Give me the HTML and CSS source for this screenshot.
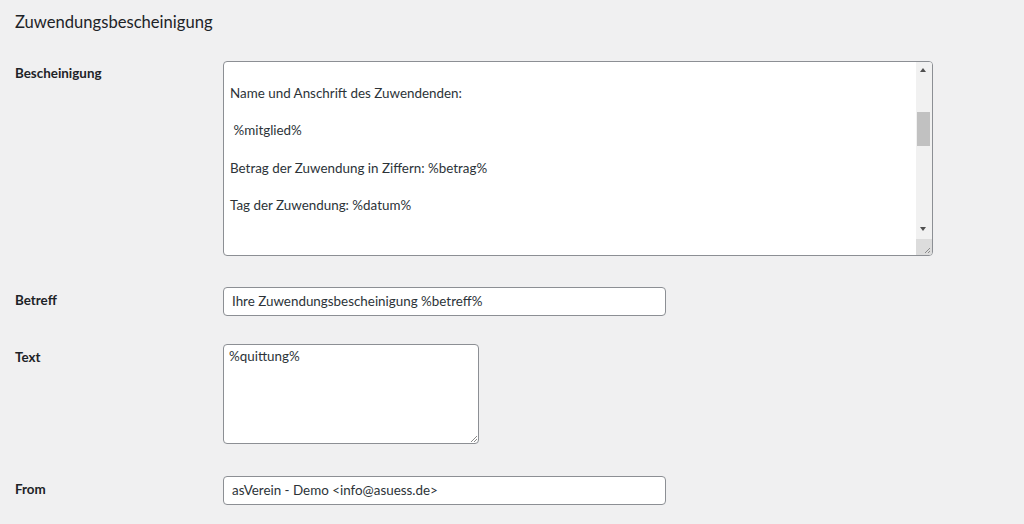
FILE: index.html
```html
<!DOCTYPE html>
<html lang="de">
<head>
<meta charset="utf-8">
<title>Zuwendungsbescheinigung</title>
<link rel="stylesheet" href="styles.css">
</head>
<body>
<div class="page">
  <h2 class="title">Zuwendungsbescheinigung</h2>
  <div class="form">
    <div class="row row-first">
      <div class="label label-first">Bescheinigung</div>
      <div class="ta-big">
        <div class="ta-content"><p>Name und Anschrift des Zuwendenden:</p><p>&nbsp;%mitglied%</p><p>Betrag der Zuwendung in Ziffern: %betrag%</p><p>Tag der Zuwendung: %datum%</p></div>
        <div class="sb">
          <div class="sb-up"></div>
          <div class="sb-thumb"></div>
          <div class="sb-down"></div>
        </div>
        <div class="sb-corner">
          <svg width="16" height="16" viewBox="0 0 16 16"><path d="M14 9 L9 14 M14 12 L12 14" stroke="#8a8a8a" stroke-width="1" fill="none"/></svg>
        </div>
      </div>
    </div>
    <div class="row row-betreff">
      <div class="label">Betreff</div>
      <div class="input">Ihre Zuwendungsbescheinigung %betreff%</div>
    </div>
    <div class="row row-text">
      <div class="label">Text</div>
      <div class="ta-small">
        <div class="ta-small-content">%quittung%</div>
        <svg class="grip" width="10" height="10" viewBox="0 0 10 10"><path d="M9 3 L3 9 M9 6 L6 9" stroke="#8a8a8a" stroke-width="1" fill="none"/></svg>
      </div>
    </div>
    <div class="row row-from">
      <div class="label">From</div>
      <div class="input">asVerein - Demo &lt;info@asuess.de&gt;</div>
    </div>
  </div>
</div>
</body>
</html>
```
FILE: styles.css
```css
html, body {
  margin: 0;
  padding: 0;
  background: #f0f0f1;
}
body {
  font-family: Lato, "Noto Sans", sans-serif;
  color: #3c434a;
  height: 524px;
  overflow: hidden;
}
.page {
  padding: 9px 0 0 15px;
}
.title {
  margin: 0;
  height: 26px;
  line-height: 26px;
  font-size: 16.6px;
  font-weight: 400;
  color: #1d2327;
}
.form {
  margin-top: 26px;
  display: flex;
  flex-direction: column;
}
.row {
  display: grid;
  grid-template-columns: 208px auto;
  align-items: start;
  justify-content: start;
}
.row-betreff { margin-top: 31px; }
.row-text { margin-top: 28px; }
.row-from { margin-top: 32px; }
.label {
  font-size: 13.4px;
  font-weight: 700;
  line-height: 18px;
  padding-top: 4px;
  color: #1d2327;
}
.label-first { padding-top: 3px; }
.ta-big {
  position: relative;
  width: 710px;
  height: 195px;
  box-sizing: border-box;
  border: 1px solid #8c8f94;
  border-radius: 4px;
  background: #fff;
  overflow: hidden;
}
.ta-content {
  padding: 22px 24px 0 6px;
  font-size: 13.4px;
  line-height: 18.66px;
  color: #2c3338;
}
.ta-content p {
  margin: 0 0 18.66px;
}
.sb {
  position: absolute;
  top: 0;
  right: 0;
  bottom: 16px;
  width: 16px;
  background: #f1f1f1;
}
.sb-up, .sb-down {
  position: absolute;
  left: 4px;
  width: 0;
  height: 0;
  border-left: 3.5px solid transparent;
  border-right: 3.5px solid transparent;
}
.sb-up {
  top: 6px;
  border-bottom: 4px solid #505050;
}
.sb-down {
  top: 165px;
  border-top: 4px solid #505050;
}
.sb-thumb {
  position: absolute;
  top: 50px;
  left: 1px;
  width: 13px;
  height: 34px;
  background: #c1c1c1;
}
.sb-corner {
  position: absolute;
  right: 0;
  bottom: 0;
  width: 16px;
  height: 16px;
  background: #dcdcdc;
}
.sb-corner svg { display: block; }
.input {
  width: 443px;
  height: 29px;
  box-sizing: border-box;
  border: 1px solid #8c8f94;
  border-radius: 4px;
  background: #fff;
  padding: 0 8px;
  font-size: 13.4px;
  line-height: 27px;
  color: #2c3338;
  white-space: nowrap;
}
.ta-small {
  position: relative;
  width: 256px;
  height: 100px;
  box-sizing: border-box;
  border: 1px solid #8c8f94;
  border-radius: 4px;
  background: #fff;
}
.ta-small-content {
  padding: 2px 5px;
  font-size: 13.4px;
  line-height: 18px;
  color: #2c3338;
}
.grip {
  position: absolute;
  right: 0;
  bottom: 0;
}
```
